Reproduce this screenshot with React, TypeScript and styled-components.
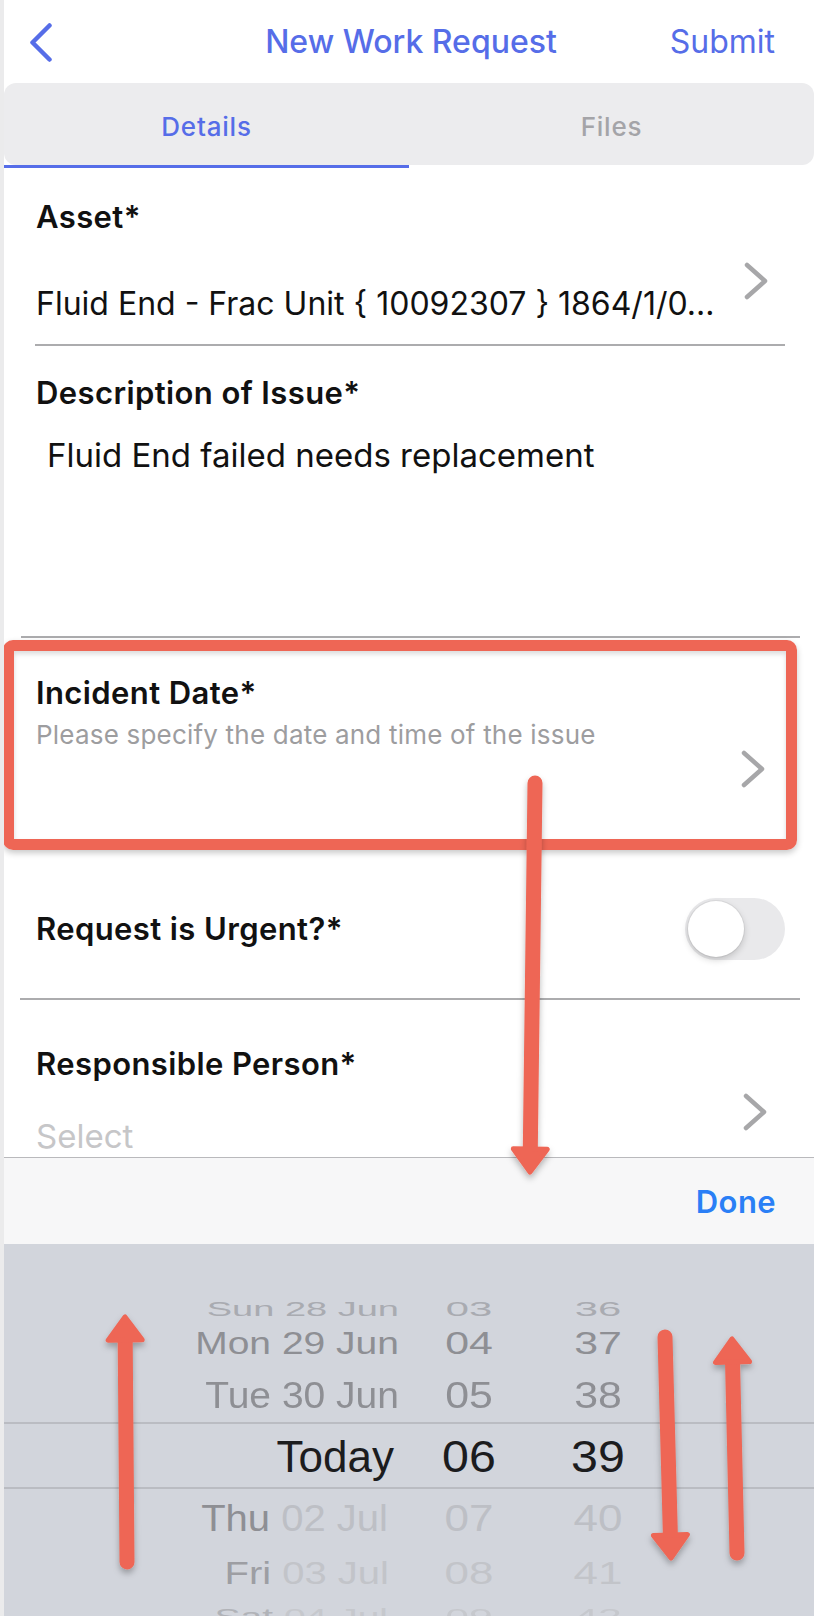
import styled, { createGlobalStyle } from "styled-components";

const BLUE = "#566de8";
const RED = "#ee6655";

const GlobalStyle = createGlobalStyle`
  * { box-sizing: border-box; }
  body {
    margin: 0;
    background: #ffffff;
    font-family: Inter, "Liberation Sans", sans-serif;
  }
`;

type Pt = [number, number];

function Arrow({ from, to }: { from: Pt; to: Pt }) {
    const dx = to[0] - from[0];
    const dy = to[1] - from[1];
    const len = Math.hypot(dx, dy);
    const ux = dx / len;
    const uy = dy / len;
    const head = 23;
    const half = 17;
    const bx = to[0] - ux * head;
    const by = to[1] - uy * head;
    const points = [
        [bx - uy * half, by + ux * half],
        [to[0], to[1]],
        [bx + uy * half, by - ux * half],
    ].map(p => p.join(",")).join(" ");

    return (
        <g filter="url(#arrowShadow)">
            <line x1={from[0]} y1={from[1]} x2={bx + ux * 2} y2={by + uy * 2} stroke={RED} strokeWidth={15} strokeLinecap="round" />
            <polygon points={points} fill={RED} stroke={RED} strokeWidth={5} strokeLinejoin="round" />
        </g>
    );
}

function Chevron({ top }: { top: number }) {
    return (
        <ChevronIcon $top={top} width="26" height="38" viewBox="0 0 26 38">
            <polyline points="4,3 22,19 4,35" fill="none" stroke="#a7a7a9" strokeWidth="4.5" strokeLinecap="round" strokeLinejoin="round" />
        </ChevronIcon>
    );
}

type Row = {
    h: number;
    shift: number;
    dx: number;
    scale: number;
    size: number;
    day: string;
    date: string;
    hour: string;
    min: string;
    dayTone: string;
    tone: string;
    selected?: boolean;
};

const rows: Row[] = [
    { h: 12, shift: -2, dx: 0, scale: 0.35, size: 38, day: "Sat", date: "27 Jun", hour: "02", min: "35", dayTone: "#a8aab0", tone: "#a8aab0" },
    { h: 30, shift: -2, dx: 0, scale: 0.55, size: 38, day: "Sun", date: "28 Jun", hour: "03", min: "36", dayTone: "#a9abb1", tone: "#a9abb1" },
    { h: 46, shift: -2, dx: 0, scale: 0.8, size: 39, day: "Mon", date: "29 Jun", hour: "04", min: "37", dayTone: "#8e8f94", tone: "#8e8f94" },
    { h: 54, shift: 0, dx: 0, scale: 0.93, size: 39, day: "Tue", date: "30 Jun", hour: "05", min: "38", dayTone: "#8e8f94", tone: "#8e8f94" },
    { h: 67, shift: 1, dx: -5, scale: 1, size: 44, day: "Today", date: "", hour: "06", min: "39", dayTone: "#1c1c1e", tone: "#1c1c1e", selected: true },
    { h: 56, shift: 1, dx: -11, scale: 0.93, size: 40, day: "Thu", date: "02 Jul", hour: "07", min: "40", dayTone: "#8e8f94", tone: "#bdbfc5" },
    { h: 51, shift: 2, dx: -10, scale: 0.8, size: 40, day: "Fri", date: "03 Jul", hour: "08", min: "41", dayTone: "#9d9ea3", tone: "#c2c4c9" },
    { h: 40, shift: 0, dx: -11, scale: 0.55, size: 39, day: "Sat", date: "04 Jul", hour: "09", min: "42", dayTone: "#b1b3b8", tone: "#c6c8cd" },
];

export default function App() {
    return (
        <>
            <GlobalStyle />
            <Screen>
                <Header>
                    <BackButton width="22" height="39" viewBox="0 0 22 39">
                        <polyline points="19.5,2.5 2.5,19.5 19.5,36.5" fill="none" stroke={BLUE} strokeWidth="4.5" strokeLinecap="round" strokeLinejoin="round" />
                    </BackButton>
                    <Title>New Work Request</Title>
                    <HeaderAction>Submit</HeaderAction>
                </Header>

                <TabBar>
                    <Tab $active>Details</Tab>
                    <Tab>Files</Tab>
                </TabBar>

                <Form>
                    <Field $ml={31} $mr={29} $pl={1} $pr={16} $pt={31} $h={178}>
                        <FieldBody>
                            <Label>Asset*</Label>
                            <Value $gap={49} $size={32}>Fluid End - Frac Unit {"{"} 10092307 {"}"} 1864/1/0...</Value>
                        </FieldBody>
                        <Chevron top={63} />
                    </Field>

                    <Field $ml={17} $mr={14} $pl={15} $pr={0} $pt={29} $h={292}>
                        <FieldBody>
                            <Label>Description of Issue*</Label>
                            <Value $gap={24} $indent={11}>Fluid End failed needs replacement</Value>
                        </FieldBody>
                    </Field>

                    <HighlightField>
                        <FieldBody>
                            <Label>Incident Date*</Label>
                            <Hint>Please specify the date and time of the issue</Hint>
                        </FieldBody>
                        <Chevron top={75} />
                    </HighlightField>

                    <Field $ml={16} $mr={14} $pl={16} $pr={15} $pt={10} $h={150} $center>
                        <Label>Request is Urgent?*</Label>
                        <Switch>
                            <Knob />
                        </Switch>
                    </Field>

                    <Field $ml={16} $mr={14} $pl={16} $pr={32} $pt={46} $h={200}>
                        <FieldBody>
                            <Label>Responsible Person*</Label>
                            <Value $gap={34} $muted>Select</Value>
                        </FieldBody>
                        <Chevron top={47} />
                    </Field>
                </Form>

                <Toolbar>
                    <DoneButton>Done</DoneButton>
                </Toolbar>

                <Picker>
                    {rows.map((row, i) => (
                        <PickerRow key={i} $h={row.h} $selected={row.selected}>
                            <DateCell $size={row.size} $scale={row.scale} $shift={row.shift} $dx={row.dx}>
                                <Tone $c={row.dayTone}>{row.day}</Tone>
                                {row.date && <Tone $c={row.tone}> {row.date}</Tone>}
                            </DateCell>
                            <NumberCell $size={row.size} $scale={row.scale} $shift={row.shift} $c={row.tone}>{row.hour}</NumberCell>
                            <NumberCell $size={row.size} $scale={row.scale} $shift={row.shift} $c={row.tone}>{row.min}</NumberCell>
                        </PickerRow>
                    ))}
                </Picker>

                <Annotations viewBox="0 0 814 1616">
                    <defs>
                        <filter id="arrowShadow" x="-50%" y="-10%" width="200%" height="120%">
                            <feDropShadow dx="0" dy="4" stdDeviation="3" floodColor="#000" floodOpacity="0.28" />
                        </filter>
                    </defs>
                    <Arrow from={[535, 783]} to={[530, 1172]} />
                    <Arrow from={[127, 1562]} to={[125, 1317]} />
                    <Arrow from={[665, 1337]} to={[671, 1558]} />
                    <Arrow from={[737, 1553]} to={[732, 1339]} />
                </Annotations>
            </Screen>
        </>
    );
}

const Screen = styled.div`
    position: relative;
    width: 814px;
    height: 1616px;
    border-left: 4px solid #ebebec;
    background: #ffffff;

    display: flex;
    flex-direction: column;
    overflow: hidden;
`;

const Header = styled.header`
    height: 83px;
    flex-shrink: 0;

    display: grid;
    grid-template-columns: 1fr auto 1fr;
    align-items: center;

    padding: 0 22px 0 26px;
`;

const BackButton = styled.svg`
    display: block;
    margin-top: 1px;
`;

const Title = styled.div`
    color: ${BLUE};
    font-size: 32px;
    font-weight: 500;
`;

const HeaderAction = styled.div`
    justify-self: end;
    margin-right: 17px;

    color: ${BLUE};
    font-size: 32px;
    font-weight: 400;
`;

const TabBar = styled.nav`
    height: 82px;
    flex-shrink: 0;
    margin-bottom: 3px;

    display: flex;

    background: #ececee;
    border-radius: 12px;
`;

const Tab = styled.div<{ $active?: boolean }>`
    flex: 1;

    display: flex;
    align-items: center;
    justify-content: center;
    padding-top: 4px;

    color: ${p => p.$active ? BLUE : "#a4a4a8"};
    font-size: 26px;
    font-weight: 500;
    letter-spacing: 0.8px;

    box-shadow: ${p => p.$active ? `0 3px 0 ${BLUE}` : "none"};
`;

const Form = styled.main`
    height: 989px;
    flex-shrink: 0;
    overflow: hidden;

    display: flex;
    flex-direction: column;
`;

const Field = styled.section<{ $ml: number; $mr: number; $pl: number; $pr: number; $pt: number; $h: number; $center?: boolean }>`
    height: ${p => p.$h}px;
    flex-shrink: 0;
    margin: 0 ${p => p.$mr}px 0 ${p => p.$ml}px;
    padding: ${p => p.$pt}px ${p => p.$pr}px 0 ${p => p.$pl}px;

    display: flex;
    align-items: ${p => p.$center ? "center" : "flex-start"};
    justify-content: space-between;

    border-bottom: 2px solid #acacae;
`;

const HighlightField = styled.section`
    height: 210px;
    flex-shrink: 0;
    margin: 2px 17px 0 -1px;
    padding: 24px 20px 0 22px;

    display: flex;
    align-items: flex-start;
    justify-content: space-between;

    border: 11px solid ${RED};
    border-radius: 10px;
    box-shadow: inset 0 3px 5px rgba(0, 0, 0, 0.14), 0 3px 6px rgba(0, 0, 0, 0.22);
`;

const FieldBody = styled.div`
    display: flex;
    flex-direction: column;
    min-width: 0;
`;

const Label = styled.div`
    color: #111111;
    font-size: 31px;
    font-weight: 600;
    line-height: 36px;
    letter-spacing: 0.4px;
`;

const Value = styled.div<{ $gap: number; $indent?: number; $muted?: boolean; $size?: number }>`
    margin-top: ${p => p.$gap}px;
    margin-left: ${p => p.$indent ?? 0}px;

    color: ${p => p.$muted ? "#c6c6c8" : "#111111"};
    font-size: ${p => p.$size ?? 33}px;
    font-weight: 400;
    line-height: 40px;
    white-space: nowrap;
`;

const Hint = styled.div`
    margin-top: 9px;

    color: #9d9d9f;
    font-size: 26px;
    line-height: 30px;
    letter-spacing: 0.2px;
    white-space: nowrap;
`;

const ChevronIcon = styled.svg<{ $top: number }>`
    display: block;
    flex-shrink: 0;
    margin-top: ${p => p.$top}px;
`;

const Switch = styled.div`
    width: 100px;
    height: 62px;
    padding: 3px;

    background: #e9e9eb;
    border-radius: 31px;
`;

const Knob = styled.div`
    width: 56px;
    height: 56px;

    background: #ffffff;
    border-radius: 50%;
    box-shadow: 0 3px 7px rgba(0, 0, 0, 0.18), 0 0 0 1px rgba(0, 0, 0, 0.05);
`;

const Toolbar = styled.div`
    height: 87px;
    flex-shrink: 0;

    display: flex;
    align-items: center;
    justify-content: flex-end;
    padding-right: 38px;

    background: #f7f7f8;
    border-top: 1px solid #b9b9bc;
`;

const DoneButton = styled.div`
    color: #2a7ff6;
    font-size: 31px;
    font-weight: 600;
    letter-spacing: 0.4px;
`;

const Picker = styled.div`
    flex: 1;
    padding-top: 36px;
    overflow: hidden;

    background: #d2d5dc;
`;

const PickerRow = styled.div<{ $h: number; $selected?: boolean }>`
    height: ${p => p.$h}px;
    overflow: hidden;

    display: grid;
    grid-template-columns: 395px 140px 118px 1fr;
    align-items: center;

    border-top: ${p => p.$selected ? "2px solid #babcc2" : "none"};
    border-bottom: ${p => p.$selected ? "2px solid #babcc2" : "none"};
`;

const DateCell = styled.div<{ $size: number; $scale: number; $shift: number; $dx: number }>`
    text-align: right;

    font-family: "Liberation Sans", Arial, sans-serif;
    font-size: ${p => p.$size}px;
    line-height: 1;
    white-space: nowrap;

    transform: translate(${p => p.$dx}px, ${p => p.$shift}px) scaleY(${p => p.$scale});
`;

const Tone = styled.span<{ $c: string }>`
    color: ${p => p.$c};
`;

const NumberCell = styled.div<{ $size: number; $scale: number; $shift: number; $c: string }>`
    text-align: center;

    color: ${p => p.$c};
    font-family: "Liberation Sans", Arial, sans-serif;
    font-size: ${p => p.$size}px;
    line-height: 1;

    transform: translateY(${p => p.$shift}px) scale(1.1, ${p => p.$scale});
`;

const Annotations = styled.svg`
    position: absolute;
    left: -4px;
    top: 0;
    width: 814px;
    height: 1616px;
    pointer-events: none;
`;
